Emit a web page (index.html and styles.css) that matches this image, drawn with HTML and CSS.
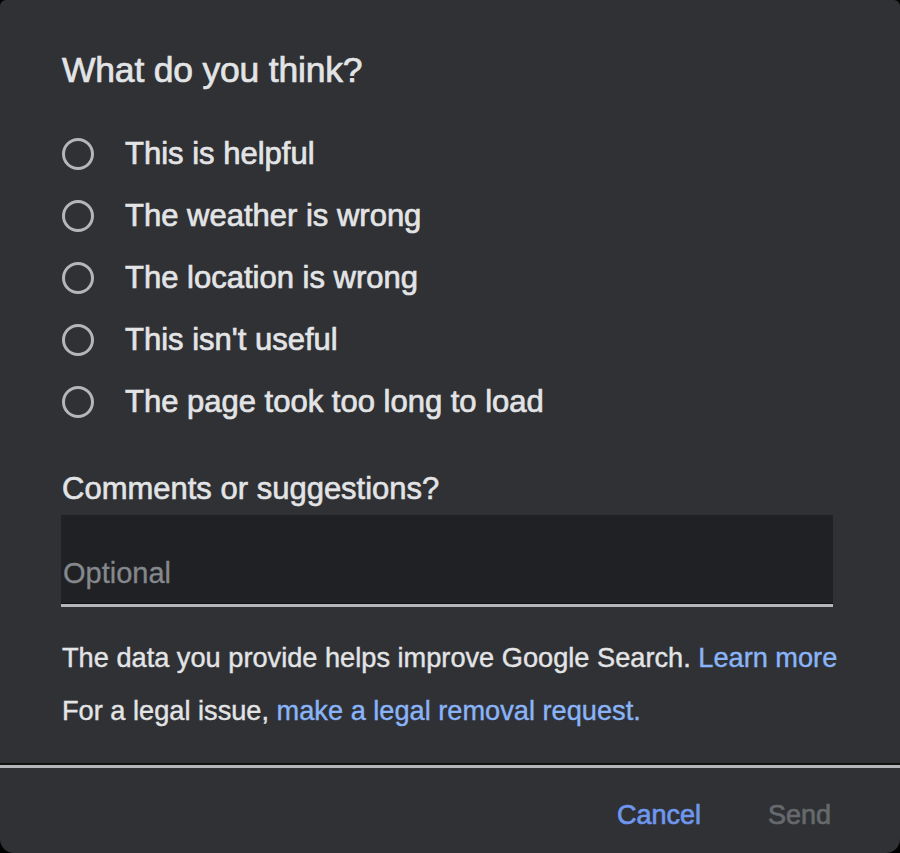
FILE: index.html
```html
<!DOCTYPE html>
<html>
<head>
<meta charset="utf-8">
<link rel="stylesheet" href="styles.css">
</head>
<body>
<div class="dialog">
  <div class="content">
    <h1 class="title">What do you think?</h1>
    <div class="options">
      <label class="option"><span class="radio"></span><span class="label">This is helpful</span></label>
      <label class="option"><span class="radio"></span><span class="label">The weather is wrong</span></label>
      <label class="option"><span class="radio"></span><span class="label">The location is wrong</span></label>
      <label class="option"><span class="radio"></span><span class="label">This isn't useful</span></label>
      <label class="option"><span class="radio"></span><span class="label">The page took too long to load</span></label>
    </div>
    <h2 class="subtitle">Comments or suggestions?</h2>
    <div class="field"><span class="placeholder">Optional</span></div>
    <p class="note">The data you provide helps improve Google Search. <a class="link">Learn more</a></p>
    <p class="note">For a legal issue, <a class="link">make a legal removal request.</a></p>
  </div>
  <div class="actions">
    <button class="btn cancel">Cancel</button>
    <button class="btn send">Send</button>
  </div>
</div>
</body>
</html>
```
FILE: styles.css
```css
html, body {
  margin: 0;
  padding: 0;
  background: #000;
}
body {
  font-family: "Liberation Sans", Arial, sans-serif;
  color: #e3e4e6;
}
.dialog {
  width: 900px;
  height: 853px;
  background: #303134;
  border-radius: 6px 6px 14px 14px;
  display: flex;
  flex-direction: column;
  overflow: hidden;
}
.content {
  padding: 50px 60px 0 62px;
  flex: 1;
}
.title {
  margin: 0;
  font-size: 35.5px;
  font-weight: normal;
  line-height: 40px;
  letter-spacing: -0.2px;
  -webkit-text-stroke: 0.7px currentColor;
}
.options {
  margin-top: 33px;
  display: flex;
  flex-direction: column;
}
.option {
  height: 62px;
  display: flex;
  align-items: center;
}
.radio {
  box-sizing: border-box;
  width: 32px;
  height: 32px;
  border: 3px solid #b4b6ba;
  border-radius: 50%;
  margin-right: 31px;
  flex: none;
}
.label {
  font-size: 31px;
  line-height: 36px;
  -webkit-text-stroke: 0.7px currentColor;
}
.subtitle {
  margin: 38px 0 0;
  font-size: 31px;
  font-weight: normal;
  line-height: 36px;
  -webkit-text-stroke: 0.6px currentColor;
}
.field {
  margin-top: 8px;
  width: 770px;
  margin-left: -1px;
  height: 89px;
  background: #202124;
  border-bottom: 3px solid #b4b6ba;
  box-shadow: 0 -1px 0 #111 inset;
  display: flex;
  align-items: flex-end;
  padding-left: 2px;
}
.placeholder {
  font-size: 29px;
  line-height: 36px;
  color: #85888c;
  margin-bottom: 13px;
  -webkit-text-stroke: 0.3px currentColor;
}
.note {
  margin: 0;
  font-size: 27.2px;
  line-height: 53px;
  -webkit-text-stroke: 0.4px currentColor;
}
.note:first-of-type {
  margin-top: 24px;
}
.link {
  color: #8ab4f8;
  text-decoration: none;
}
.actions {
  border-top: 3px solid #b4b6ba;
  box-shadow: 0 -2px 0 #111;
  height: 77px;
  padding-top: 8px;
  display: flex;
  align-items: center;
  justify-content: flex-end;
  padding-right: 69px;
  gap: 67px;
}
.btn {
  background: none;
  border: none;
  padding: 0;
  font-family: "Liberation Sans", Arial, sans-serif;
  font-size: 27px;
  font-weight: normal;
  line-height: 36px;
  -webkit-text-stroke: 0.7px currentColor;
}
.cancel {
  color: #6f97ee;
}
.send {
  color: #66696d;
}
```
